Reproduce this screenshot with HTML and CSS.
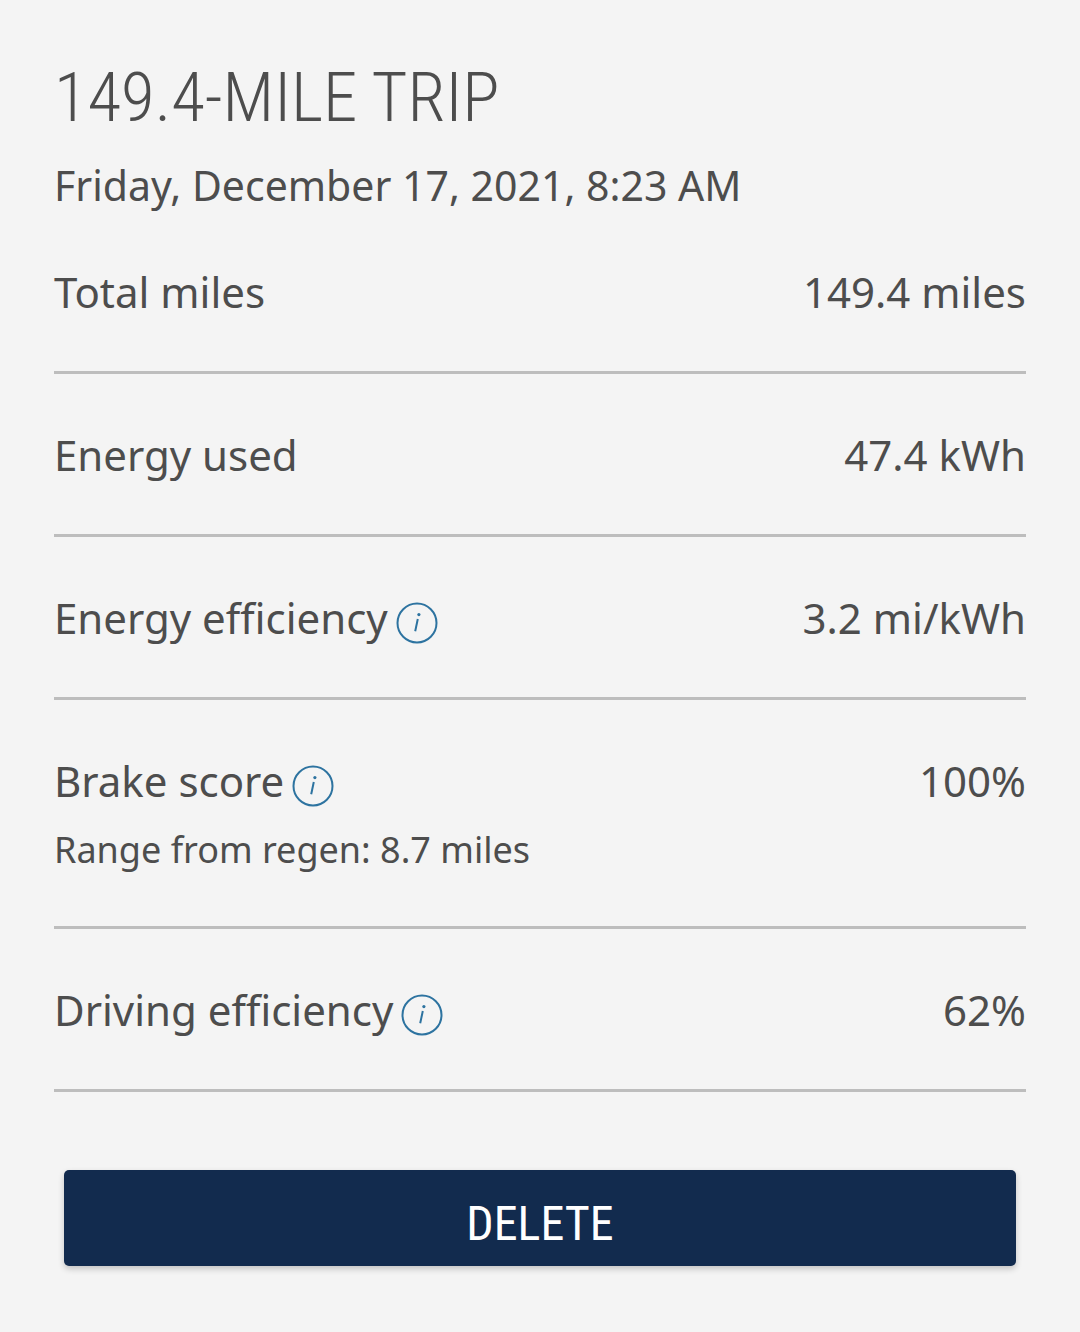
FILE: index.html
```html
<!DOCTYPE html>
<html lang="en">
<head>
  <meta charset="UTF-8">
  <meta name="viewport" content="width=device-width, initial-scale=1">
  <title>Trip details</title>
  <link rel="stylesheet" href="styles.css">
</head>
<body>
  <main class="trip">
    <h1 class="trip-title">149.4-MILE TRIP</h1>
    <p class="trip-date">Friday, December 17, 2021, 8:23 AM</p>

    <dl class="stats">
      <div class="row">
        <dt>Total miles</dt>
        <dd>149.4 miles</dd>
      </div>
      <div class="row">
        <dt>Energy used</dt>
        <dd>47.4 kWh</dd>
      </div>
      <div class="row">
        <dt>Energy efficiency
          <button class="info" type="button" aria-label="About energy efficiency">
            <svg viewBox="0 0 42 42"><circle cx="21" cy="21" r="19.5"/><path d="M21.8 17l-2.6 12.3"/><circle class="dot" cx="22.9" cy="12.6" r="1.6"/></svg>
          </button>
        </dt>
        <dd>3.2 mi/kWh</dd>
      </div>
      <div class="row">
        <dt>Brake score
          <button class="info" type="button" aria-label="About brake score">
            <svg viewBox="0 0 42 42"><circle cx="21" cy="21" r="19.5"/><path d="M21.8 17l-2.6 12.3"/><circle class="dot" cx="22.9" cy="12.6" r="1.6"/></svg>
          </button>
        </dt>
        <dd>100%</dd>
        <dd class="note">Range from regen: 8.7 miles</dd>
      </div>
      <div class="row">
        <dt>Driving efficiency
          <button class="info" type="button" aria-label="About driving efficiency">
            <svg viewBox="0 0 42 42"><circle cx="21" cy="21" r="19.5"/><path d="M21.8 17l-2.6 12.3"/><circle class="dot" cx="22.9" cy="12.6" r="1.6"/></svg>
          </button>
        </dt>
        <dd>62%</dd>
      </div>
    </dl>

    <button class="delete" type="button">DELETE</button>
  </main>
</body>
</html>
```
FILE: styles.css
```css
* { box-sizing: border-box; }
body { margin: 0; background: #f4f4f4; color: #4d4d4d; font-family: "Noto Sans", sans-serif; }
.trip { padding: 56px 54px 66px; }

.trip-title { margin: 0; font-family: "Roboto Condensed", Roboto, sans-serif; font-size: 69px; font-weight: 300; line-height: 84px; }
.trip-date { margin: 20px 0 0; font-size: 41px; line-height: 50px; }

.stats { margin: 1px 0 0; }
.row { display: flex; flex-wrap: wrap; justify-content: space-between; padding: 53px 0 51px; border-bottom: 3px solid #bdbdbd; font-size: 42px; line-height: 56px; }
.row dt { display: flex; gap: 8px; }
.row dd { margin: 0; }
.row .note { flex-basis: 100%; margin-top: 16px; font-size: 36px; line-height: 50px; }

.info { height: 42px; margin-top: 12px; padding: 0; border: none; background: none; cursor: pointer; }
.info svg { display: block; width: 42px; height: 42px; fill: none; stroke: #2d73a0; stroke-width: 2; }
.info .dot { fill: #2d73a0; stroke: none; }

.delete { display: block; width: calc(100% - 20px); height: 96px; margin: 78px auto 0; padding: 11px 0 0; border: none; border-radius: 5px; background: #122b4e; color: #fff; font-family: "Roboto Condensed", Roboto, sans-serif; font-size: 48px; box-shadow: 0 3px 6px rgba(0, 0, 0, 0.2); cursor: pointer; }
```
